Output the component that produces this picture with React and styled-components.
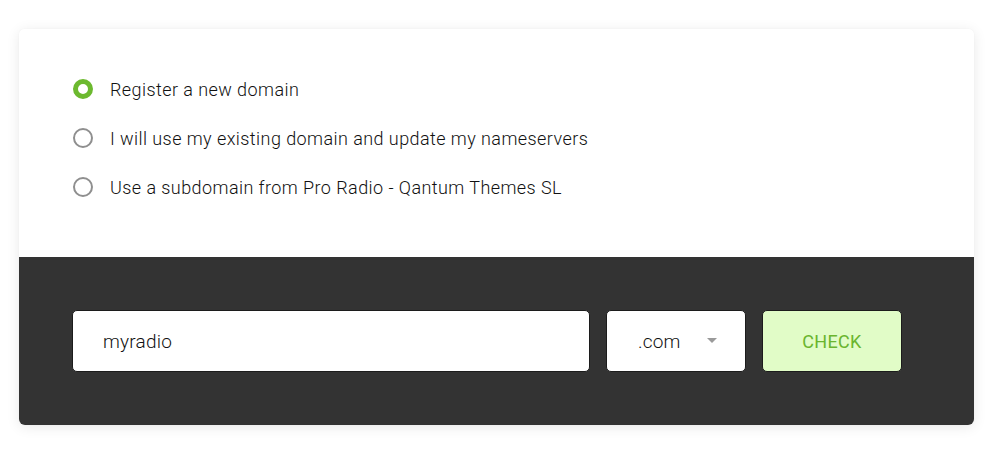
import React, { useState } from "react";
import styled, { createGlobalStyle } from "styled-components";

const Global = createGlobalStyle`
  html, body { margin: 0; padding: 0; background: #ffffff; }
  body { font-family: Roboto, "Noto Sans", sans-serif; }
  * { box-sizing: border-box; }
`;

const Page = styled.div`
  width: 1000px;
  height: 450px;
  padding: 29px 26px 25px 19px;
  background: #fff;
`;

const Card = styled.div`
  width: 955px;
  border-radius: 6px;
  overflow: hidden;
  box-shadow: 0 2px 14px rgba(0, 0, 0, 0.09), 0 0 2px rgba(0, 0, 0, 0.04);
  display: flex;
  flex-direction: column;
`;

const Options = styled.div`
  background: #fff;
  height: 228px;
  padding: 50px 54px 0 54px;
  display: flex;
  flex-direction: column;
  gap: 29px;
`;

const OptionRow = styled.label`
  display: flex;
  align-items: center;
  gap: 17px;
  height: 20px;
  cursor: pointer;
  font-size: 18px;
  font-weight: 300;
  color: #111;
  letter-spacing: 0.43px;
`;

const Radio = styled.span`
  width: 20px;
  height: 20px;
  border-radius: 50%;
  flex: none;
  background: #fff;
  border: ${(p) => (p.$checked ? "5.5px solid #6cb92f" : "2px solid #8f8f8f")};
`;

const Bar = styled.div`
  background: #333333;
  height: 168px;
  padding: 53px 72px 0 53px;
  display: flex;
  gap: 16px;
`;

const Field = styled.div`
  height: 62px;
  background: #fff;
  border: 1px solid #1c1c1c;
  border-radius: 5px;
  display: flex;
  align-items: center;
  font-size: 19px;
  color: #111;
  font-weight: 300;
  letter-spacing: 0.2px;
`;

const TextField = styled(Field)`
  width: 518px;
  padding-left: 30px;
`;

const SelectField = styled(Field)`
  width: 140px;
  padding: 0 28px 0 31px;
  justify-content: space-between;
`;

const Caret = styled.span`
  width: 0;
  height: 0;
  border-left: 5px solid transparent;
  border-right: 5px solid transparent;
  border-top: 5px solid #9a9a9a;
  margin-top: -2px;
`;

const CheckButton = styled.button`
  width: 140px;
  height: 62px;
  background: #e1fcc7;
  border: 1px solid #1c1c1c;
  border-radius: 5px;
  color: #6ab52e;
  font-family: Roboto, sans-serif;
  font-size: 18px;
  font-weight: 400;
  letter-spacing: 0.3px;
  cursor: pointer;
`;

const options = [
  "Register a new domain",
  "I will use my existing domain and update my nameservers",
  "Use a subdomain from Pro Radio - Qantum Themes SL",
];

export default function App() {
  const [sel, setSel] = useState(0);
  return (
    <>
      <Global />
      <Page>
        <Card>
          <Options>
            {options.map((o, i) => (
              <OptionRow key={o} onClick={() => setSel(i)}>
                <Radio $checked={sel === i} />
                {o}
              </OptionRow>
            ))}
          </Options>
          <Bar>
            <TextField>myradio</TextField>
            <SelectField>
              .com
              <Caret />
            </SelectField>
            <CheckButton>CHECK</CheckButton>
          </Bar>
        </Card>
      </Page>
    </>
  );
}
